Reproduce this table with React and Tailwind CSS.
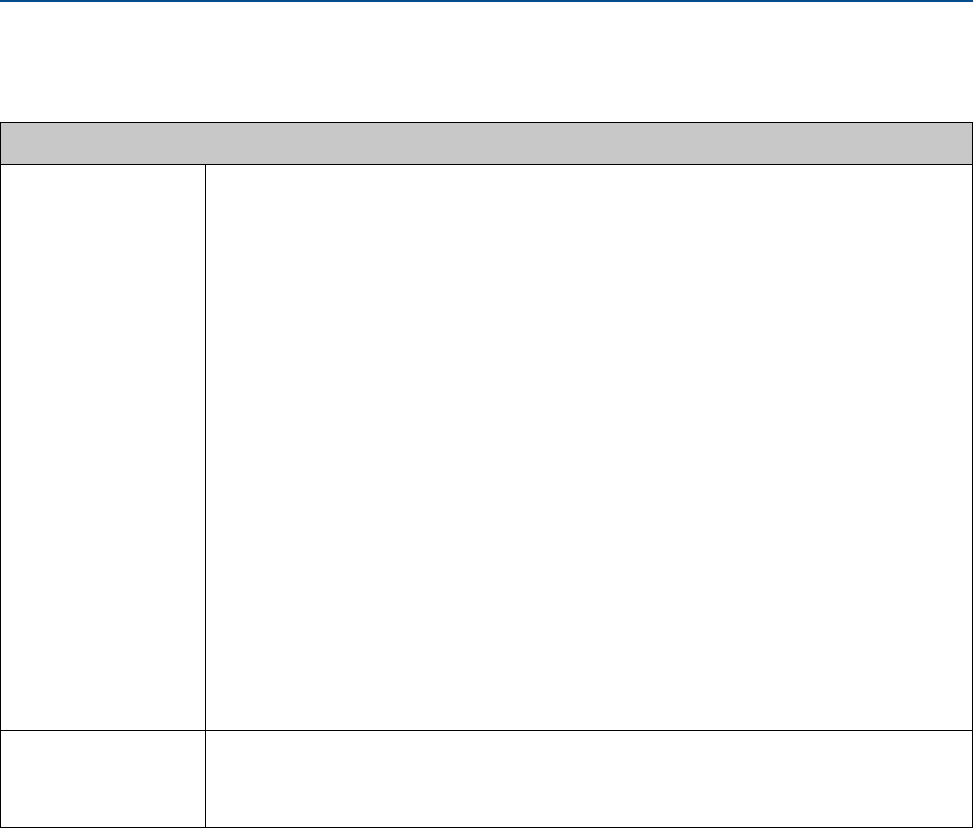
import React from 'react';

// Empty form table with a blue rule across the top
const Row = ({ height }) => (
  <div className={`flex border-b border-black ${height}`}>
    <div className="w-[205px] shrink-0 border-r border-black" />
    <div className="flex-1" />
  </div>
);

export default function App() {
  return (
    <div className="w-[974px] h-[829px] bg-white font-['Liberation_Sans',Arial,sans-serif]">
      <div className="h-[2px] w-[973px] bg-[#034b8c]" />
      <div className="mt-[120px] w-[973px] border-x border-t border-black">
        <div className="h-[42px] border-b border-black bg-[#c8c8c8]" />
        <div className="flex h-[566px] border-b border-black">
          <div className="w-[205px] shrink-0 border-r border-black" />
          <div className="flex-1" />
        </div>
        <div className="flex h-[97px] border-b border-black">
          <div className="w-[205px] shrink-0 border-r border-black" />
          <div className="flex-1" />
        </div>
      </div>
    </div>
  );
}
